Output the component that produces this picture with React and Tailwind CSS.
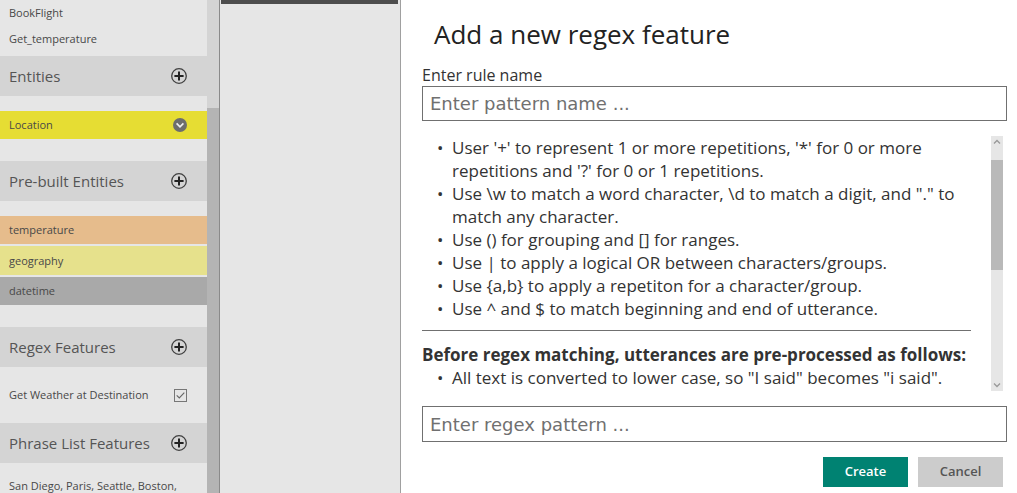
import React from "react";

function AddButton({ label }) {
  return (
    <button type="button" aria-label={label} className="block size-4">
      <svg viewBox="0 0 16 16" className="size-4" fill="none">
        <circle cx="8" cy="8" r="7.3" stroke="#404040" strokeWidth="1.3" />
        <path d="M8 3.4v9.2M3.4 8h9.2" stroke="#222222" strokeWidth="2" />
      </svg>
    </button>
  );
}

function SectionHeader({ title }) {
  return (
    <div className="flex h-10 shrink-0 items-center justify-between bg-[#d4d4d4] pr-5 pl-[9px]">
      <h2 className="text-[15px] leading-5 text-[#555555]">{title}</h2>
      <AddButton label={`Add to ${title}`} />
    </div>
  );
}

function Sidebar() {
  return (
    <aside className="flex w-[220px] shrink-0 overflow-hidden border-r border-[#8a8a8a] text-[11px] text-[#484848]">
      <div className="flex min-w-0 flex-1 flex-col bg-[#e6e6e6]">
        <ul className="mb-1 px-[9px] leading-[26px]">
          <li>BookFlight</li>
          <li>Get_temperature</li>
        </ul>

        <SectionHeader title="Entities" />
        <div className="mt-[15px] mb-[22px] flex h-7 shrink-0 items-center justify-between bg-[#e6dd33] pr-5 pl-[9px]">
          <span>Location</span>
          <button type="button" aria-label="Expand Location" className="block size-[14px]">
            <svg viewBox="0 0 14 14" className="size-[14px]" fill="none">
              <circle cx="7" cy="7" r="7" fill="#6d6d6d" />
              <path d="M3.6 5.4 7 8.8l3.4-3.4" stroke="#eeeeee" strokeWidth="1.7" />
            </svg>
          </button>
        </div>

        <SectionHeader title="Pre-built Entities" />
        <ul className="mt-[15px] mb-[22px] flex flex-col gap-0.5 leading-7">
          <li className="bg-[#e6bc8c] px-[9px]">temperature</li>
          <li className="bg-[#e6e18c] px-[9px] leading-[29px]">geography</li>
          <li className="bg-[#a9a9a9] px-[9px]">datetime</li>
        </ul>

        <SectionHeader title="Regex Features" />
        <label className="flex h-14 shrink-0 items-center justify-between pr-5 pl-[9px]">
          <span>Get Weather at Destination</span>
          <span className="grid size-[13px]">
            <input
              type="checkbox"
              defaultChecked
              className="peer col-start-1 row-start-1 size-[13px] appearance-none border border-[#777777]"
            />
            <svg
              viewBox="0 0 13 13"
              className="pointer-events-none invisible col-start-1 row-start-1 size-[13px] peer-checked:visible"
              fill="none"
            >
              <path d="M2.7 6.3 5.3 9l5-5.3" stroke="#666666" strokeWidth="1.1" />
            </svg>
          </span>
        </label>

        <SectionHeader title="Phrase List Features" />
        <p className="mt-4 px-[9px] leading-[14px]">San Diego, Paris, Seattle, Boston,</p>
      </div>
      <div className="flex w-3 shrink-0 flex-col bg-[#d4d4d4] pt-[108px]">
        <div className="flex-1 bg-[#b4b4b4]" />
      </div>
    </aside>
  );
}

const rules = [
  "User '+' to represent 1 or more repetitions, '*' for 0 or more repetitions and '?' for 0 or 1 repetitions.",
  "Use \\w to match a word character, \\d to match a digit, and \".\" to match any character.",
  "Use () for grouping and [] for ranges.",
  "Use | to apply a logical OR between characters/groups.",
  "Use {a,b} to apply a repetiton for a character/group.",
  "Use ^ and $ to match beginning and end of utterance.",
];

function Bullets({ items }) {
  return (
    <ul>
      {items.map((item) => (
        <li key={item} className="flex">
          <span aria-hidden="true" className="w-[30px] shrink-0 pl-[15px]">
            •
          </span>
          <span>{item}</span>
        </li>
      ))}
    </ul>
  );
}

function Dialog() {
  const field =
    "w-full border border-[#707070] bg-white px-[7px] font-['DejaVu_Sans',sans-serif] text-[18px] text-[#333333] placeholder:text-[#707070]";
  return (
    <main className="min-w-0 flex-1 overflow-hidden border-l border-[#a0a0a0] bg-white pr-[10px] pl-[21px] text-[#333333]">
      <h1 className="mt-4 ml-3 text-[26px] leading-9 text-[#222222]">Add a new regex feature</h1>
      <label htmlFor="rule-name" className="mt-3 block text-[16px] leading-[22px]">
        Enter rule name
      </label>
      <input id="rule-name" type="text" placeholder="Enter pattern name ..." className={`${field} block h-[35px]`} />

      <div className="mt-[15px] mr-1 flex h-[255px]">
        <div className="min-w-0 flex-1 overflow-hidden pr-5 text-[17px] leading-[23px]">
          <Bullets items={rules} />
          <hr className="mt-2.5 border-[#707070]" />
          <h2 className="mt-3 font-bold">Before regex matching, utterances are pre-processed as follows:</h2>
          <Bullets items={['All text is converted to lower case, so "I said" becomes "i said".']} />
        </div>
        <div className="flex w-3 shrink-0 flex-col bg-[#e6e6e6]">
          <svg viewBox="0 0 12 12" className="h-3 w-3" fill="none">
            <path d="M3 7.5l3-3 3 3" stroke="#999999" strokeWidth="1.3" />
          </svg>
          <div className="mt-3 h-[110px] bg-[#b9b9b9]" />
          <svg viewBox="0 0 12 12" className="mt-auto h-3 w-3" fill="none">
            <path d="M3 4.5l3 3 3-3" stroke="#999999" strokeWidth="1.3" />
          </svg>
        </div>
      </div>

      <input
        type="text"
        aria-label="Regex pattern"
        placeholder="Enter regex pattern ..."
        className={`${field} mt-[15px] block h-9`}
      />
      <div className="mt-[15px] mr-1 flex justify-end gap-2.5 text-[13px] font-semibold">
        <button type="button" className="h-[30px] w-[85px] bg-[#008272] text-white">
          Create
        </button>
        <button type="button" className="h-[30px] w-[85px] bg-[#cccccc] text-[#555555]">
          Cancel
        </button>
      </div>
    </main>
  );
}

export default function App() {
  return (
    <div className="flex h-screen overflow-hidden bg-[#e6e6e6] font-['Open_Sans','Noto_Sans',sans-serif]">
      <Sidebar />
      <div className="w-[180px] shrink-0 pr-0.5 pl-px">
        <div className="h-1 bg-[#4d4d4d]" />
      </div>
      <Dialog />
    </div>
  );
}
